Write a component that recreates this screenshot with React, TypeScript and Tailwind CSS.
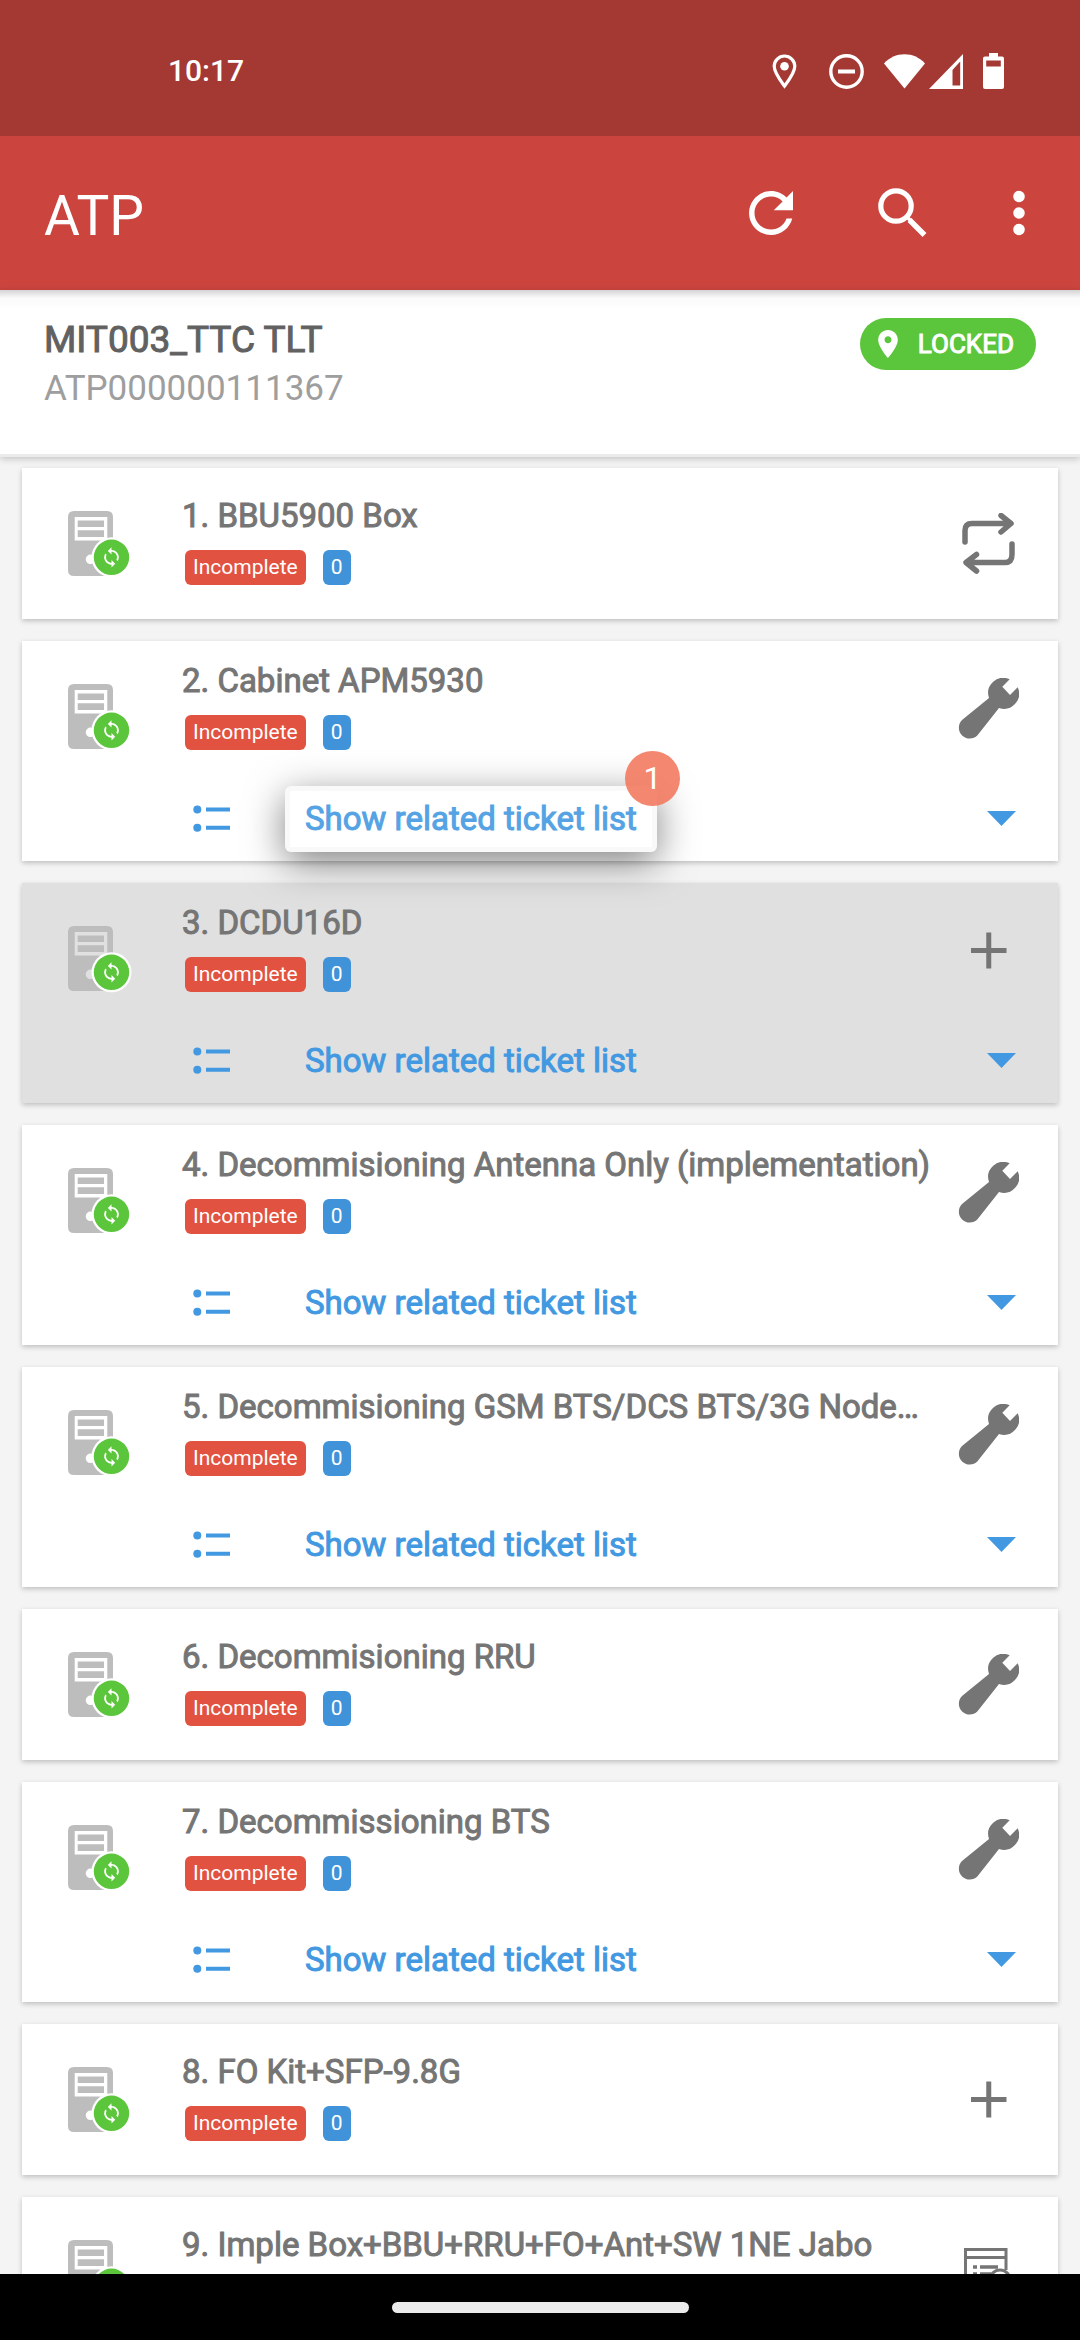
import React from "react";

type Action = "repeat" | "wrench" | "plus" | "form";

type Item = {
  title: string;
  action: Action;
  tickets?: boolean;
  selected?: boolean;
  step?: number;
};

const items: Item[] = [
  { title: "1. BBU5900 Box", action: "repeat" },
  { title: "2. Cabinet APM5930", action: "wrench", tickets: true, step: 1 },
  { title: "3. DCDU16D", action: "plus", tickets: true, selected: true },
  { title: "4. Decommisioning Antenna Only (implementation)", action: "wrench", tickets: true },
  { title: "5. Decommisioning GSM BTS/DCS BTS/3G Node…", action: "wrench", tickets: true },
  { title: "6. Decommisioning RRU", action: "wrench" },
  { title: "7. Decommissioning BTS", action: "wrench", tickets: true },
  { title: "8. FO Kit+SFP-9.8G", action: "plus" },
  { title: "9. Imple Box+BBU+RRU+FO+Ant+SW 1NE Jabo", action: "form" },
];

function StatusBar() {
  return (
    <div className="flex h-[136px] shrink-0 items-start justify-between bg-[#a43934] pt-[50px] pr-[76px] pl-[168px] text-white">
      <time className="text-[30px] leading-[42px] font-medium">10:17</time>
      <div className="flex items-center pt-[3px]">
        <svg className="mr-8 h-[35px] w-[25px]" viewBox="0 0 25 35" fill="none">
          <path d="M12.5 2A10.3 10.3 0 0 0 2.2 12.3C2.2 19 9.5 28 12.5 32 15.500 28 22.800 19 22.800 12.300A10.300 10.300 0 0 0 12.500 2Z" stroke="#fff" strokeWidth="3.2" />
          <circle cx="12.500" cy="12.200" r="4.300" fill="#fff" />
        </svg>
        <svg className="mr-[20px] h-[35px] w-[35px]" viewBox="0 0 35 35" fill="none" stroke="#fff">
          <circle cx="17.500" cy="17.500" r="15.700" strokeWidth="3.400" />
          <path d="M9 17.500H26" strokeWidth="4" />
        </svg>
        <svg className="mr-[4px] h-[35px] w-[41px]" viewBox="0 0 41 35" fill="#fff">
          <path d="M0 9.500C5.500 3.500 12.500 0.300 20.500 0.300S35.500 3.500 41 9.500L20.500 34.500Z" />
        </svg>
        <svg className="mr-[20px] h-[35px] w-[34px]" viewBox="0 0 34 35" fill="#fff">
          <path fillRule="evenodd" d="M34 0V35H0ZM31.200 7.500L23.500 16V31.500H31.200Z" />
        </svg>
        <svg className="h-[36px] w-[21px]" viewBox="0 0 21 36" fill="#fff">
          <path fillRule="evenodd" d="M6 0H15V3.500H19Q21 3.500 21 5.500V34Q21 36 19 36H2Q0 36 0 34V5.500Q0 3.500 2 3.500H6ZM3.200 7.500V13.500H17.800V7.500Z" />
        </svg>
      </div>
    </div>
  );
}

function AppBar() {
  return (
    <header className="flex h-[154px] shrink-0 items-center justify-between bg-[#cb443e] pr-7 pl-[44px] text-white">
      <h1 className="pt-[6px] text-[55px] leading-[64px] font-normal">ATP</h1>
      <div className="flex items-center">
        <button type="button" aria-label="Refresh" className="mr-[66px]">
          <svg className="size-[66px]" viewBox="0 0 24 24" fill="currentColor">
            <path d="M17.650 6.350C16.200 4.900 14.210 4 12 4c-4.420 0-7.990 3.580-7.990 8s3.570 8 7.990 8c3.730 0 6.840-2.550 7.730-6h-2.080c-.820 2.330-3.040 4-5.650 4-3.310 0-6-2.690-6-6s2.690-6 6-6c1.660 0 3.140.690 4.220 1.780L13 11h7V4l-2.350 2.350z" />
          </svg>
        </button>
        <button type="button" aria-label="Search" className="mr-[50px]">
          <svg className="size-[66px]" viewBox="0 0 66 66" fill="none" stroke="currentColor">
            <circle cx="26" cy="26" r="15.200" strokeWidth="5.200" />
            <path d="M39.500 40L54.500 55" strokeWidth="5.500" />
            <path d="M36.500 36.500L41 41" strokeWidth="3.500" />
          </svg>
        </button>
        <button type="button" aria-label="More options">
          <svg className="h-[66px] w-[66px]" viewBox="0 0 24 24" fill="currentColor">
            <circle cx="12" cy="6" r="2.100" />
            <circle cx="12" cy="12" r="2.100" />
            <circle cx="12" cy="18" r="2.100" />
          </svg>
        </button>
      </div>
    </header>
  );
}

function SiteHeader() {
  return (
    <section className="relative z-10 flex h-[167px] shrink-0 items-start justify-between border-b-[3px] border-[#ebebeb] bg-linear-to-b from-[#d4d4d4] via-[#fafafa] via-[8px] to-white to-[20px] px-[44px] pt-7 shadow-[0_2px_7px_rgba(0,0,0,0.2)]">
      <div>
        <h2 className="text-[37px] leading-[44px] text-[#616161] [-webkit-text-stroke:1px_#616161]">MIT003_TTC TLT</h2>
        <p className="pt-[5px] text-[35px] leading-[44px] text-[#9e9e9e]">ATP000000111367</p>
      </div>
      <span className="flex h-[52px] items-center rounded-full bg-[#5bc53b] pr-[22px] pl-[18px] text-[26px] leading-8 text-white [-webkit-text-stroke:1px_#fff]">
        <svg className="mr-[20px] h-[28px] w-[20px]" viewBox="5 2 14 20" fill="currentColor">
          <path d="M12 2C8.130 2 5 5.130 5 9c0 5.250 7 13 7 13s7-7.750 7-13c0-3.870-3.130-7-7-7zm0 9.500c-1.380 0-2.500-1.120-2.500-2.500s1.120-2.500 2.500-2.500 2.500 1.120 2.500 2.500-1.120 2.500-2.500 2.500z" />
        </svg>
        LOCKED
      </span>
    </section>
  );
}

function DeviceIcon() {
  return (
    <svg className="h-[68px] w-[66px]" viewBox="0 0 66 68">
      <path
        fill="#bdbdbd"
        fillRule="evenodd"
        d="M6 0H39Q45 0 45 6V59Q45 65 39 65H6Q0 65 0 59V6Q0 0 6 0ZM6.700 6V29.500H39.300V6ZM22.500 43.500A4.800 4.800 0 0 0 22.500 53.100 4.800 4.800 0 0 0 22.500 43.500Z"
      />
      <path fill="#bdbdbd" d="M9.700 9.500H36V16H9.700ZM9.700 19.300H36V26H9.700Z" />
      <circle cx="43.500" cy="46.300" r="20" fill="#fff" />
      <circle cx="43.500" cy="46.300" r="17.700" fill="#5bc53b" />
      <g transform="translate(32.500 35.300) scale(0.917)">
        <path
          fill="#fff"
          d="M12 4V1L8 5l4 4V6c3.310 0 6 2.690 6 6 0 1.010-.250 1.970-.700 2.800l1.460 1.460C19.540 15.030 20 13.570 20 12c0-4.420-3.580-8-8-8zm0 14c-3.310 0-6-2.690-6-6 0-1.010.250-1.970.700-2.800L5.240 7.740C4.460 8.970 4 10.430 4 12c0 4.420 3.580 8 8 8v3l4-4-4-4v3z"
        />
      </g>
    </svg>
  );
}

function ActionIcon({ action }: { action: Action }) {
  if (action === "repeat") {
    return (
      <svg className="size-[61px]" viewBox="0 0 61 61" fill="none" stroke="#757575" strokeWidth="5.500" strokeLinecap="round" strokeLinejoin="round">
        <path d="M7 29V17.500Q7 10.500 14 10.500H52M43 2.500L53 10.500 43 19" />
        <path d="M54 31V41.500Q54 49.500 47 49.500H9M18.500 41.500L8 49.500 18.500 58" />
      </svg>
    );
  }
  if (action === "wrench") {
    return (
      <svg className="size-[61px]" viewBox="0 0 61 61" fill="#757575">
        <path d="M51.700 1.300L44.300 8.800 52 17 59.700 9.300A15.200 15.200 0 0 1 41 30L19.500 57.300A10.800 10.800 0 1 1 4 42L31 20A15.200 15.200 0 0 1 51.700 1.300Z" />
      </svg>
    );
  }
  if (action === "plus") {
    return (
      <svg className="size-[61px]" viewBox="0 0 61 61" stroke="#757575" strokeWidth="5">
        <path d="M13 30.500H48.500M30.750 12.500V48.500" />
      </svg>
    );
  }
  return (
    <svg className="size-[61px]" viewBox="0 0 61 61" fill="none" stroke="#757575" strokeWidth="3">
      <path d="M28 52H7.500V7.500H48V28M7.500 15.500H48" />
      <path d="M15 25H19M22 25H40M15 32H19M22 32H33M15 39H19M22 39H30" strokeWidth="3.500" />
      <circle cx="42" cy="38" r="10" />
      <path d="M49 45L57 54" strokeWidth="4" />
    </svg>
  );
}

function TicketRow({ step }: { step?: number }) {
  return (
    <button type="button" className="flex h-[85px] w-full items-center pr-[42px] pl-[171px] text-left">
      <svg className="mr-[74px] h-[28px] w-[38px] shrink-0" viewBox="0 0 38 28" fill="#4299e1">
        <circle cx="4.300" cy="4.500" r="4" />
        <circle cx="4.300" cy="22.800" r="4" />
        <path d="M13 2.500H37V6.500H13ZM13 20.800H37V24.800H13Z" />
      </svg>
      <span className="relative text-[33px] leading-[44px] text-[#4299e1]">
        <span className="[-webkit-text-stroke:1px_#4299e1]">Show related ticket list</span>
        {step !== undefined && (
          <>
            <span className="absolute -inset-x-5 -inset-y-[11px] rounded-md border-[5px] border-black/[0.025] bg-white/10 shadow-[0_10px_38px_rgba(0,0,0,0.5)]" />
            <span className="absolute -top-[46px] -right-[43px] flex size-[55px] items-center justify-center rounded-full bg-[#f37a5f]/90 text-[32px] leading-none text-white">
              {step}
            </span>
          </>
        )}
      </span>
      <svg className="ml-auto h-[15px] w-[29px] shrink-0" viewBox="0 0 29 15" fill="#4299e1">
        <path d="M0 0H29L14.500 15Z" />
      </svg>
    </button>
  );
}

function ItemCard({ item }: { item: Item }) {
  return (
    <li
      className={`relative mx-[22px] mb-[22px] shadow-[0_2px_5px_rgba(0,0,0,0.22)] ${item.selected ? "bg-[#e0e0e0]" : "bg-white"} ${item.step ? "z-[1]" : ""}`}
    >
      <div className={`flex items-start ${item.tickets ? "h-[135px]" : "h-[151px]"}`}>
        <div className="ml-[46px] w-[114px] shrink-0 pt-[43px]">
          <DeviceIcon />
        </div>
        <div className={`min-w-0 flex-1 ${item.tickets ? "pt-[18px]" : "pt-[26px]"}`}>
          <h3 className="truncate text-[33px] leading-[44px] text-[#757575] [-webkit-text-stroke:1px_#757575]">{item.title}</h3>
          <div className="flex gap-[17px] pt-[12px] pl-[3px] text-[21px] leading-[35px] text-white">
            <span className="rounded-md bg-[#e15241] px-2">Incomplete</span>
            <span className="rounded-md bg-[#4093d9] px-2">0</span>
          </div>
        </div>
        <button type="button" aria-label={`Open ${item.title}`} className="mr-[39px] ml-3 self-center">
          <ActionIcon action={item.action} />
        </button>
      </div>
      {item.tickets && <TicketRow step={item.step} />}
    </li>
  );
}

export default function App() {
  return (
    <div className="flex h-screen flex-col overflow-hidden bg-[#f4f4f4] font-['Roboto',sans-serif]">
      <StatusBar />
      <AppBar />
      <SiteHeader />
      <main className="min-h-0 flex-1 overflow-x-hidden overflow-y-auto pt-[11px] [scrollbar-width:none]">
        <ul>
          {items.map((item) => (
            <ItemCard key={item.title} item={item} />
          ))}
        </ul>
      </main>
      <footer className="relative z-10 flex h-[66px] shrink-0 items-center justify-center bg-black">
        <div className="h-[11px] w-[297px] rounded-full bg-[#ebebeb]" />
      </footer>
    </div>
  );
}
